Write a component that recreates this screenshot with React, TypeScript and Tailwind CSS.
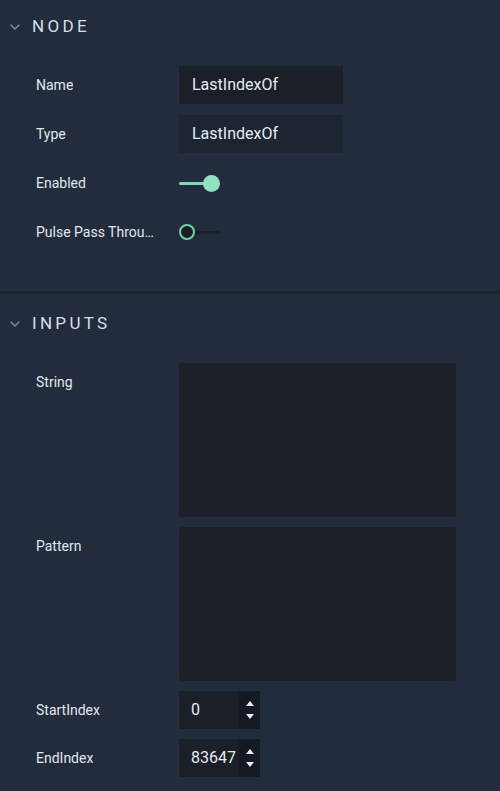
import React, { useState } from 'react';

const Chevron: React.FC = () => (
  <svg className="w-[12px] h-[12px]" viewBox="0 0 12 12" fill="none">
    <path d="M2 4l4 4 4-4" stroke="#7f8896" strokeWidth="1.5" strokeLinecap="round" strokeLinejoin="round" />
  </svg>
);

const SectionHeader: React.FC<{ title: string }> = ({ title }) => (
  <div className="h-[53px] flex items-center pl-[9px]">
    <Chevron />
    <span className="ml-[11px] text-[17px] tracking-[3.3px] text-[#d9dee6]">{title}</span>
  </div>
);

const Row: React.FC<{ label: string; children: React.ReactNode }> = ({ label, children }) => (
  <div className="flex items-start">
    <div className="w-[179px] shrink-0 pl-[36px] pr-[22px] h-[38px] flex items-center">
      <span className="truncate text-[14px] text-[#e2e7ee]">{label}</span>
    </div>
    {children}
  </div>
);

const Toggle: React.FC<{ on: boolean; onChange: () => void }> = ({ on, onChange }) => (
  <button onClick={onChange} className="h-[38px] flex items-center">
    {on ? (
      <div className="flex items-center">
        <div className="w-[26px] h-[3px] bg-[#7fd9b4] rounded-full" />
        <div className="w-[17px] h-[17px] -ml-[2px] rounded-full bg-[#8fe3c2]" />
      </div>
    ) : (
      <div className="flex items-center">
        <div className="w-[16px] h-[16px] rounded-full border-2 border-[#72d0a8] bg-[#1a2029]" />
        <div className="w-[25px] h-[3px] bg-[#191e27] rounded-full" />
      </div>
    )}
  </button>
);

const NumberInput: React.FC<{ value: string }> = ({ value }) => (
  <div className="flex w-[81px] h-[38px] bg-[#1a1f28] rounded-[2px] overflow-hidden">
    <div className="flex-1 flex items-center pl-[12px] text-[16px] text-[#e6ebf1] whitespace-nowrap">{value}</div>
    <div className="w-[21px] bg-[#141923] flex flex-col items-center justify-center gap-[8px]">
      <svg width="8" height="5" viewBox="0 0 8 5"><path d="M0 5L4 0L8 5Z" fill="#e6ebf1" /></svg>
      <svg width="8" height="5" viewBox="0 0 8 5"><path d="M0 0L4 5L8 0Z" fill="#e6ebf1" /></svg>
    </div>
  </div>
);

export default function App() {
  const [enabled, setEnabled] = useState(true);
  const [pulse, setPulse] = useState(false);

  return (
    <div className="w-[500px] h-[791px] bg-[#222c3c] overflow-hidden" style={{ fontFamily: 'Roboto, "Noto Sans", sans-serif' }}>
      <SectionHeader title="NODE" />
      <div className="pt-[13px] flex flex-col gap-[11px] pb-[40px]">
        <Row label="Name">
          <div className="w-[164px] h-[38px] bg-[#1a1f28] flex items-center pl-[13px] text-[16px] text-[#e6ebf1]">LastIndexOf</div>
        </Row>
        <Row label="Type">
          <div className="w-[164px] h-[38px] bg-[#1e2532] flex items-center pl-[13px] text-[16px] text-[#e6ebf1]">LastIndexOf</div>
        </Row>
        <Row label="Enabled">
          <Toggle on={enabled} onChange={() => setEnabled(!enabled)} />
        </Row>
        <Row label="Pulse Pass Through">
          <Toggle on={pulse} onChange={() => setPulse(!pulse)} />
        </Row>
      </div>
      <div className="h-[3px] bg-[#1b2330]" />
      <div className="pt-[3px]">
        <SectionHeader title="INPUTS" />
        <div className="pt-[13px] flex flex-col gap-[10px]">
          <Row label="String">
            <textarea className="w-[277px] h-[154px] bg-[#1b2029] rounded-[3px] resize-none outline-none text-[#e6ebf1]" />
          </Row>
          <Row label="Pattern">
            <textarea className="w-[277px] h-[154px] bg-[#1b2029] rounded-[3px] resize-none outline-none text-[#e6ebf1]" />
          </Row>
          <Row label="StartIndex">
            <NumberInput value="0" />
          </Row>
          <Row label="EndIndex">
            <NumberInput value="83647" />
          </Row>
        </div>
      </div>
    </div>
  );
}
